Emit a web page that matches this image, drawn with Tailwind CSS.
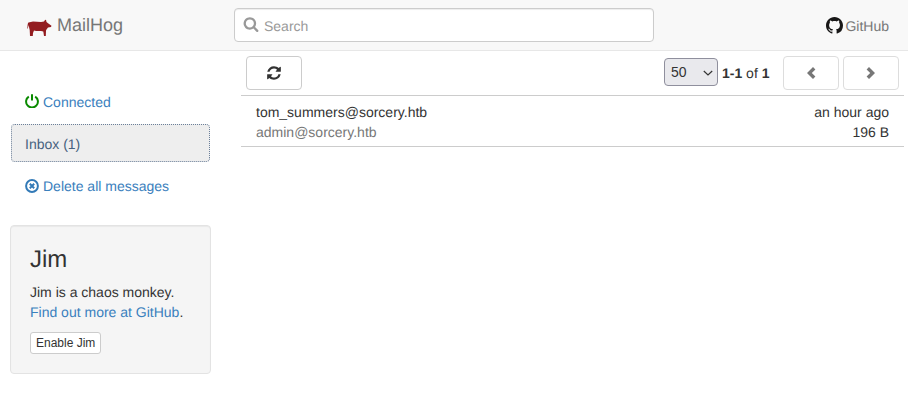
<!DOCTYPE html>
<html lang="en">
<head>
<meta charset="utf-8">
<title>MailHog</title>
<script src="https://cdn.jsdelivr.net/npm/@tailwindcss/browser@4"></script>
</head>
<body class="bg-white text-[14px] leading-[20px] text-[#333] font-['Liberation_Sans',Arial,sans-serif] [text-rendering:geometricPrecision] w-[908px] h-[413px] overflow-hidden">
<header class="h-[51px] bg-[#f8f8f8] border-b border-[#e7e7e7] flex items-center">
  <a class="flex items-center w-[234px] pl-[27px] text-[18px] text-[#777]">
    <svg class="w-[25px] h-[17px] mr-[5px] mt-[4px]" viewBox="0 0 25 17"><path fill="#931c20" d="M1 4 1.5 3.5 6 2.5 14 3 17 2.5 18 1 19 .8 19.5 3 21 4.2 24.5 6.8 24 8 21 8.5 19.5 10.5 19 11.5 18.8 17 17 17 16.3 12.5 14 12 9 12 7 11.5 6 14 5.8 17 3 17 2.7 11 2 8 1.5 6 1 9 .3 10 .6 6Z"/></svg>
    <span class="mt-[-1px]">MailHog</span>
  </a>
  <div class="w-[420px] h-[34px] bg-white border border-[#ccc] rounded-[4px] flex items-center pl-[8px] shadow-[inset_0_1px_1px_rgba(0,0,0,0.075)]">
    <svg class="w-[16px] h-[16px] mr-[5px] mt-[-2px]" viewBox="0 0 1792 1792"><path fill="#999" d="M1216 832q0-185-131.5-316.5t-316.5-131.5-316.5 131.5-131.5 316.5 131.5 316.5 316.5 131.5 316.5-131.5 131.5-316.5zm512 832q0 52-38 90t-90 38q-54 0-90-38l-343-342q-179 124-399 124-143 0-273.5-55.5t-225-150-150-225-55.5-273.5 55.5-273.5 150-225 225-150 273.5-55.5 273.5 55.5 225 150 150 225 55.5 273.5q0 220-124 399l343 343q37 37 37 90z"/></svg>
    <span class="text-[#999] mt-[1px]">Search</span>
  </div>
  <a class="ml-auto mr-[19px] flex items-center text-[#777]">
    <svg class="w-[17px] h-[17px] mr-[2px] mt-[1px]" viewBox="0 0 16 16"><path fill="#181717" d="M8 0C3.58 0 0 3.58 0 8c0 3.54 2.29 6.53 5.47 7.59.4.07.55-.17.55-.38 0-.19-.01-.82-.01-1.49-2.01.37-2.53-.49-2.69-.94-.09-.23-.48-.94-.82-1.13-.28-.15-.68-.52-.01-.53.63-.01 1.08.58 1.23.82.72 1.21 1.87.87 2.33.66.07-.52.28-.87.51-1.07-1.78-.2-3.64-.89-3.64-3.95 0-.87.31-1.59.82-2.15-.08-.2-.36-1.02.08-2.12 0 0 .67-.21 2.2.82.64-.18 1.32-.27 2-.27s1.36.09 2 .27c1.53-1.04 2.2-.82 2.2-.82.44 1.1.16 1.92.08 2.12.51.56.82 1.27.82 2.15 0 3.07-1.87 3.75-3.65 3.95.29.25.54.73.54 1.48 0 1.07-.01 1.93-.01 2.2 0 .21.15.46.55.38A8.01 8.01 0 0 0 16 8c0-4.42-3.58-8-8-8z"/></svg>
    <span class="mt-[1px]">GitHub</span>
  </a>
</header>
<div class="flex">
  <aside class="w-[241px] shrink-0 pl-[10px] pr-[30px]">
    <nav class="pt-[32px] flex flex-col">
      <a class="h-[38px] flex items-center pl-[15px] text-[#3a80bd]">
        <svg class="w-[14px] h-[14px] mr-[4px] mt-[-2px]" viewBox="0 0 14 14" fill="none" stroke="#0a8a00" stroke-width="2"><path d="M3.8 2.6a5.9 5.9 0 1 0 6.4 0"/><path d="M7 .2v6.4"/></svg>
        Connected
      </a>
      <a class="mt-[3px] ml-[1px] mr-[1px] h-[38px] flex items-center pl-[14px] pt-[1px] bg-[#eee] rounded-[4px] outline-1 outline-offset-[-1px] outline-dotted outline-[#6b7f99]"><span class="text-[#47627f]">Inbox (1)</span></a>
      <a class="mt-[5px] h-[38px] flex items-center pl-[15px] text-[#3a80bd]">
        <svg class="w-[14px] h-[14px] mr-[4px] mt-[-1px]" viewBox="0 0 14 14" fill="none" stroke="#337ab7"><circle cx="7" cy="7" r="5.9" stroke-width="2"/><path d="M4.8 4.8l4.4 4.4M9.2 4.8l-4.4 4.4" stroke-width="2"/></svg>
        Delete all messages
      </a>
    </nav>
    <section class="mt-[20px] h-[149px] bg-[#f5f5f5] border border-[#e3e3e3] rounded-[4px] pl-[19px] pt-[21px] shadow-[inset_0_1px_1px_rgba(0,0,0,0.05)]">
      <h2 class="text-[24px] leading-[26px] mb-[9px]">Jim</h2>
      <p>Jim is a chaos monkey.<br><a class="text-[#3a80bd]">Find out more at GitHub</a>.</p>
      <button class="mt-[10px] h-[22px] px-[5px] bg-white border border-[#ccc] rounded-[3px] text-[12px] leading-[18px] block">Enable Jim</button>
    </section>
  </aside>
  <main class="w-[663px]">
    <div class="h-[45px] border-b border-[#ccc] flex items-start pt-[5px]">
      <button class="ml-[5px] w-[56px] h-[34px] bg-white border border-[#ccc] rounded-[4px] flex items-center justify-center">
        <svg class="w-[16px] h-[16px]" viewBox="0 0 1792 1792"><path fill="#333" d="M1639 1056q0 5-1 7-64 268-268 434.5t-478 166.5q-146 0-282.5-55t-243.5-157l-129 129q-19 19-45 19t-45-19-19-45v-448q0-26 19-45t45-19h448q26 0 45 19t19 45-19 45l-137 137q71 66 161 102t187 36q134 0 250-65t186-179q11-17 53-117 8-23 30-23h192q13 0 22.5 9.5t9.5 22.5zm25-800v448q0 26-19 45t-45 19h-448q-26 0-45-19t-19-45 19-45l138-138q-148-137-349-137-134 0-250 65t-186 179q-11 17-53 117-8 23-30 23h-199q-13 0-22.5-9.5t-9.5-22.5v-7q65-268 270-434.5t480-166.5q146 0 284 55.5t245 156.5l130-129q19-19 45-19t45 19 19 45z"/></svg>
      </button>
      <div class="relative ml-[362px] mt-[2px] w-[54px] h-[28px]">
        <select class="appearance-none w-full h-full pl-[6px] bg-[#e9e9ed] border border-[#8f8f9d] rounded-[4px] text-[14px]"><option>50</option></select>
        <svg class="absolute left-[39px] top-[12px] w-[10px] h-[6px] pointer-events-none" viewBox="0 0 10 6" fill="none" stroke="#333" stroke-width="1.2"><path d="M.8 1 5 5l4.2-4"/></svg>
      </div>
      <span class="ml-[4px] mt-[7px] w-[47px] whitespace-nowrap"><b>1-1</b> of <b>1</b></span>
      <button class="ml-[14px] w-[56px] h-[34px] bg-white border border-[#ddd] rounded-[4px] flex items-center justify-center">
        <svg class="w-[12px] h-[14px]" viewBox="0 0 12 14"><path fill="#777" d="M8 1l2.4 2.4L6.8 7l3.6 3.6L8 13 2 7z"/></svg>
      </button>
      <button class="ml-[4px] w-[56px] h-[34px] bg-white border border-[#ddd] rounded-[4px] flex items-center justify-center">
        <svg class="w-[12px] h-[14px]" viewBox="0 0 12 14"><path fill="#777" d="M4 1L1.6 3.4 5.2 7l-3.6 3.6L4 13l6-6z"/></svg>
      </button>
    </div>
    <div class="h-[51px] border-b border-[#ccc] px-[15px] pt-[6px] flex justify-between">
      <div><div>tom_summers@sorcery.htb</div><div class="text-[#777]">admin@sorcery.htb</div></div>
      <div class="text-right"><div>an hour ago</div><div>196 B</div></div>
    </div>
  </main>
</div>
</body>
</html>
